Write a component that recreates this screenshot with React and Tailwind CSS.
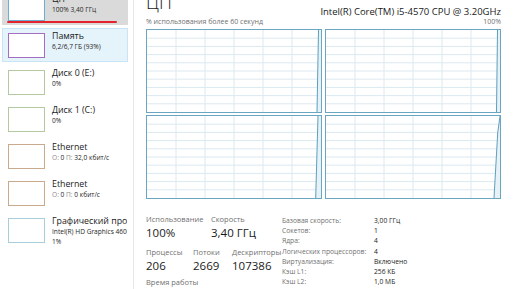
import React from "react";

const FONT = { fontFamily: '"Open Sans", "Noto Sans", sans-serif' };

const items = [
  { title: "ЦП", sub: [["", "100% 3,40 ГГц"]], border: "border-[#6eaed3]", state: "sel" },
  { title: "Память", sub: [["", "6,2/6,7 ГБ (93%)"]], border: "border-[#a56dc2]", state: "hover" },
  { title: "Диск 0 (E:)", sub: [["", "0%"]], border: "border-[#b3c99f]" },
  { title: "Диск 1 (C:)", sub: [["", "0%"]], border: "border-[#b3c99f]" },
  { title: "Ethernet", sub: [["О: ", "0"], [" П: ", "32,0 кбит/с"]], border: "border-[#c9aa8c]" },
  { title: "Ethernet", sub: [["О: ", "0"], [" П: ", "0 кбит/с"]], border: "border-[#c9aa8c]" },
  { title: "Графический процессор 0", sub: [["", "Intel(R) HD Graphics 4600"]], extra: "1%", border: "border-[#a8cedc]" },
];

function SideItem({ it }) {
  const bg =
    it.state === "sel"
      ? "bg-[#dadada] border-[#dadada]"
      : it.state === "hover"
      ? "bg-[#e5f3fb] border-[#c9e4f6]"
      : "border-transparent";
  return (
    <div className={`ml-[2px] w-[126px] h-[34px] shrink-0 flex items-start gap-[7px] pl-[5px] pt-[4px] border overflow-hidden ${bg}`}>
      <div className={`w-[37px] h-[25px] shrink-0 border bg-white ${it.border}`} />
      <div className="mt-[-2px] flex flex-col min-w-0 whitespace-nowrap">
        <div className="text-[8.8px] leading-[11px] text-[#1a1a1a]">{it.title}</div>
        <div className="text-[6.6px] leading-[10px] text-[#262626]">
          {it.sub.map(([a, b], i) => (
            <React.Fragment key={i}>
              {a && <span className="text-[#8a8a8a]">{a}</span>}
              <span>{b}</span>
            </React.Fragment>
          ))}
        </div>
        {it.extra && <div className="text-[6.6px] leading-[10px] text-[#262626]">{it.extra}</div>}
      </div>
    </div>
  );
}

function Graph({ line }) {
  const W = 174;
  const H = 82;
  const fill = [...line, [W, 0], [W, H]].map((p) => p.join(",")).join(" ");
  const pl = line.map((p) => p.join(",")).join(" ");
  const vx = [29, 58, 87, 116, 145];
  const hy = [1, 2, 3, 4, 5, 6, 7, 8, 9].map((k) => k * 8.2);
  return (
    <div className="w-[176px] h-[84px] border border-[#6aa6bf] bg-white">
      <svg width={W} height={H} viewBox={`0 0 ${W} ${H}`} className="block">
        {vx.map((x) => (
          <line key={"v" + x} x1={x} y1={0} x2={x} y2={H} stroke="#dce9f1" strokeWidth="1" />
        ))}
        {hy.map((y) => (
          <line key={"h" + y} x1={0} y1={y} x2={W} y2={y} stroke="#dce9f1" strokeWidth="1" />
        ))}
        <polygon points={fill} fill="#e6f1f8" />
        <polyline points={pl} fill="none" stroke="#5e9fbb" strokeWidth="1" />
      </svg>
    </div>
  );
}

const infoRows = [
  ["Базовая скорость:", "3,00 ГГц"],
  ["Сокетов:", "1"],
  ["Ядра:", "4"],
  ["Логических процессоров:", "4"],
  ["Виртуализация:", "Включено"],
  ["Кэш L1:", "256 КБ"],
  ["Кэш L2:", "1,0 МБ"],
];

function Stat({ label, value, w }) {
  return (
    <div className={w}>
      <div className="text-[7.5px] leading-[10px] text-[#707070] whitespace-nowrap">{label}</div>
      <div className="text-[11.5px] leading-[16px] text-[#1a1a1a] mt-[1px] whitespace-nowrap">{value}</div>
    </div>
  );
}

export default function App() {
  return (
    <div className="w-[516px] h-[289px] overflow-hidden bg-white flex" style={FONT}>
      <aside className="w-[134px] shrink-0 border-r border-[#e8e8e8] relative">
        <div className="flex flex-col gap-[3px] mt-[-9px]">
          {items.map((it, i) => (
            <SideItem key={i} it={it} />
          ))}
        </div>
        <div className="absolute left-[7px] top-[21px] w-[110px] h-[2px] rounded-full bg-[#e3242d]" />
      </aside>

      <main className="flex-1 pl-[12px] pr-[15px] flex flex-col min-w-0">
        <div className="h-[17px] flex justify-between items-start">
          <div className="text-[18px] leading-[18px] font-light text-[#1a1a1a] mt-[-7px]">ЦП</div>
          <div className="text-[9.5px] leading-[12px] text-[#1a1a1a] mt-[6px] whitespace-nowrap">
            Intel(R) Core(TM) i5-4570 CPU @ 3.20GHz
          </div>
        </div>
        <div className="h-[10px] flex justify-between text-[7px] leading-[10px] text-[#707070]">
          <span>% использования более 60 секунд</span>
          <span>100%</span>
        </div>
        <div className="mt-[2px] grid grid-cols-[176px_176px] gap-x-[3px] gap-y-[2px]">
          <Graph line={[[170, 82], [171.5, 0]]} />
          <Graph line={[[170.5, 82], [171.5, 0]]} />
          <Graph line={[[168.7, 82], [171, 0]]} />
          <Graph line={[[168, 82], [171.7, 17], [174, 0]]} />
        </div>

        <div className="mt-[15px] flex">
          <div className="w-[136px] shrink-0 flex flex-col">
            <div className="flex">
              <Stat label="Использование" value="100%" w="w-[65px]" />
              <Stat label="Скорость" value="3,40 ГГц" w="" />
            </div>
            <div className="flex mt-[6px]">
              <Stat label="Процессы" value="206" w="w-[47px]" />
              <Stat label="Потоки" value="2669" w="w-[39px]" />
              <Stat label="Дескрипторы" value="107386" w="" />
            </div>
            <div className="mt-[3px] text-[7.5px] leading-[10px] text-[#707070]">Время работы</div>
          </div>

          <div className="mt-[2px] flex flex-col">
            {infoRows.map(([k, v]) => (
              <div key={k} className="flex h-[10.2px] text-[6.7px] leading-[10.2px] whitespace-nowrap">
                <span className="w-[92px] shrink-0 text-[#707070]">{k}</span>
                <span className="text-[#1a1a1a]">{v}</span>
              </div>
            ))}
          </div>
        </div>
      </main>
    </div>
  );
}
